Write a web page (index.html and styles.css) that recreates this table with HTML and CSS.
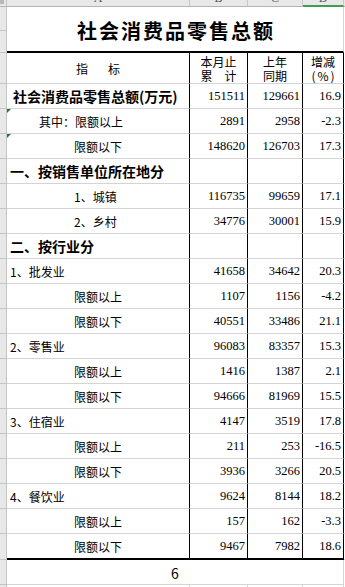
FILE: index.html
```html
<!DOCTYPE html>
<html lang="zh">
<head>
<meta charset="utf-8">
<title>社会消费品零售总额</title>
<link rel="stylesheet" href="styles.css">
</head>
<body>
<div class="sheet">
  <div class="row colhead">
    <div class="rh corner"><span class="cornermark"></span></div>
    <div class="ch ca"><span>A</span></div>
    <div class="ch cb"><span>B</span></div>
    <div class="ch cc"><span>C</span></div>
    <div class="ch cd sel"><span>D</span></div>
    <div class="ch tail"></div>
  </div>

  <div class="row title-row">
    <div class="rh split"><div class="rh-top"></div><div class="rh-bot"></div></div>
    <div class="merged title">社会消费品零售总额</div>
    <div class="tail plain"></div>
  </div>

  <div class="row head-row">
    <div class="rh"></div>
    <div class="c ca hc">指<span class="sp"></span>标</div>
    <div class="c cb hc"><span>本月止</span><span>累　计</span></div>
    <div class="c cc hc"><span>上年</span><span>同期</span></div>
    <div class="c cd hc"><span>增减</span><span class="pct">(%)</span></div>
    <div class="tail"></div>
  </div>

  <div class="row">
    <div class="rh"></div>
    <div class="c ca bold i1">社会消费品零售总额(万元)</div>
    <div class="c cb n">151511</div>
    <div class="c cc n">129661</div>
    <div class="c cd n">16.9</div>
    <div class="tail"></div>
  </div>
  <div class="row">
    <div class="rh"></div>
    <div class="c ca i2 flag">其中：限额以上</div>
    <div class="c cb n">2891</div>
    <div class="c cc n">2958</div>
    <div class="c cd n">-2.3</div>
    <div class="tail"></div>
  </div>
  <div class="row">
    <div class="rh"></div>
    <div class="c ca i3 flag">限额以下</div>
    <div class="c cb n">148620</div>
    <div class="c cc n">126703</div>
    <div class="c cd n">17.3</div>
    <div class="tail"></div>
  </div>
  <div class="row">
    <div class="rh"></div>
    <div class="c ca bold i0">一、按销售单位所在地分</div>
    <div class="c cb n"></div>
    <div class="c cc n"></div>
    <div class="c cd n"></div>
    <div class="tail"></div>
  </div>
  <div class="row">
    <div class="rh"></div>
    <div class="c ca i3">1、城镇</div>
    <div class="c cb n">116735</div>
    <div class="c cc n">99659</div>
    <div class="c cd n">17.1</div>
    <div class="tail"></div>
  </div>
  <div class="row">
    <div class="rh"></div>
    <div class="c ca i3">2、乡村</div>
    <div class="c cb n">34776</div>
    <div class="c cc n">30001</div>
    <div class="c cd n">15.9</div>
    <div class="tail"></div>
  </div>
  <div class="row">
    <div class="rh"></div>
    <div class="c ca bold i0">二、按行业分</div>
    <div class="c cb n"></div>
    <div class="c cc n"></div>
    <div class="c cd n"></div>
    <div class="tail"></div>
  </div>

  <div class="row">
    <div class="rh"></div>
    <div class="c ca i0">1、批发业</div>
    <div class="c cb n">41658</div>
    <div class="c cc n">34642</div>
    <div class="c cd n">20.3</div>
    <div class="tail"></div>
  </div>
  <div class="row">
    <div class="rh"></div>
    <div class="c ca i3">限额以上</div>
    <div class="c cb n">1107</div>
    <div class="c cc n">1156</div>
    <div class="c cd n">-4.2</div>
    <div class="tail"></div>
  </div>
  <div class="row">
    <div class="rh"></div>
    <div class="c ca i3">限额以下</div>
    <div class="c cb n">40551</div>
    <div class="c cc n">33486</div>
    <div class="c cd n">21.1</div>
    <div class="tail"></div>
  </div>

  <div class="row">
    <div class="rh"></div>
    <div class="c ca i0">2、零售业</div>
    <div class="c cb n">96083</div>
    <div class="c cc n">83357</div>
    <div class="c cd n">15.3</div>
    <div class="tail"></div>
  </div>
  <div class="row">
    <div class="rh"></div>
    <div class="c ca i3">限额以上</div>
    <div class="c cb n">1416</div>
    <div class="c cc n">1387</div>
    <div class="c cd n">2.1</div>
    <div class="tail"></div>
  </div>
  <div class="row">
    <div class="rh"></div>
    <div class="c ca i3">限额以下</div>
    <div class="c cb n">94666</div>
    <div class="c cc n">81969</div>
    <div class="c cd n">15.5</div>
    <div class="tail"></div>
  </div>

  <div class="row">
    <div class="rh"></div>
    <div class="c ca i0">3、住宿业</div>
    <div class="c cb n">4147</div>
    <div class="c cc n">3519</div>
    <div class="c cd n">17.8</div>
    <div class="tail"></div>
  </div>
  <div class="row">
    <div class="rh"></div>
    <div class="c ca i3">限额以上</div>
    <div class="c cb n">211</div>
    <div class="c cc n">253</div>
    <div class="c cd n">-16.5</div>
    <div class="tail"></div>
  </div>
  <div class="row">
    <div class="rh"></div>
    <div class="c ca i3">限额以下</div>
    <div class="c cb n">3936</div>
    <div class="c cc n">3266</div>
    <div class="c cd n">20.5</div>
    <div class="tail"></div>
  </div>

  <div class="row">
    <div class="rh"></div>
    <div class="c ca i0">4、餐饮业</div>
    <div class="c cb n">9624</div>
    <div class="c cc n">8144</div>
    <div class="c cd n">18.2</div>
    <div class="tail"></div>
  </div>
  <div class="row">
    <div class="rh"></div>
    <div class="c ca i3">限额以上</div>
    <div class="c cb n">157</div>
    <div class="c cc n">162</div>
    <div class="c cd n">-3.3</div>
    <div class="tail"></div>
  </div>
  <div class="row last">
    <div class="rh"></div>
    <div class="c ca i3">限额以下</div>
    <div class="c cb n">9467</div>
    <div class="c cc n">7982</div>
    <div class="c cd n">18.6</div>
    <div class="tail"></div>
  </div>

  <div class="row foot-row">
    <div class="rh"></div>
    <div class="merged page">6</div>
    <div class="tail plain"></div>
  </div>

  <div class="row stub">
    <div class="rh"></div>
    <div class="g ca"></div>
    <div class="g cb"></div>
    <div class="g cc"></div>
    <div class="g cd"></div>
    <div class="tail plain"></div>
  </div>
</div>
</body>
</html>
```

FILE: styles.css
```css
* { box-sizing: border-box; }

html, body {
  margin: 0;
  padding: 0;
  background: #ffffff;
}

body {
  font-family: "Noto Sans CJK SC", "Noto Sans", sans-serif;
  color: #000;
  overflow: hidden;
}

.sheet {
  width: 345px;
}

.row {
  display: flex;
  height: 25px;
}

/* column widths */
.rh { width: 7px; flex: none; background: #e8e8e8; border-right: 1px solid #c4c4c4; border-bottom: 1px solid #c4c4c4; }
.ca { width: 183px; flex: none; }
.cb { width: 58px; flex: none; }
.cc { width: 55px; flex: none; }
.cd { width: 41px; flex: none; }
.tail { flex: 1; border-bottom: 1px solid #d4d4d4; }
.tail.plain { border-bottom: 0; }

/* column header strip */
.colhead { height: 7px; }
.colhead .rh { border-bottom: 1px solid #b4b4b4; }
.cornermark { display: block; width: 4px; height: 4px; background: #b8b8b8; }
.ch {
  background: #e8e8e8;
  border-right: 1px solid #c8c8c8;
  border-bottom: 1px solid #b4b4b4;
  overflow: hidden;
  text-align: center;
  font-family: "Liberation Serif", serif;
  font-size: 12px;
  color: #555;
}
.ch span { display: block; line-height: 12px; margin-top: -8px; }
.ch.sel { border-bottom: 2px solid #3f9d4f; }
.ch.tail { border-right: 0; }

/* title */
.title-row { height: 46px; }
.rh.split { display: flex; flex-direction: column; border-bottom: 1px solid #c4c4c4; }
.rh-top { height: 24px; border-bottom: 1px solid #c4c4c4; }
.rh-bot { flex: 1; }
.merged {
  width: 337px;
  flex: none;
  border-right: 1px solid #d4d4d4;
  display: flex;
  align-items: center;
  justify-content: center;
}
.title {
  border-bottom: 2px solid #000;
  font-size: 20px;
  font-weight: 700;
  letter-spacing: 2px;
  padding: 3px 0 0 2px;
}

/* cells */
.c {
  border-right: 1px solid #000;
  border-bottom: 1px solid #d4d4d4;
  display: flex;
  align-items: center;
  font-size: 12px;
  white-space: nowrap;
  position: relative;
}

.head-row { height: 31px; }
.hc {
  flex-direction: column;
  justify-content: flex-end;
  align-items: center;
  line-height: 14px;
  padding-bottom: 0;
}
.ca.hc { flex-direction: row; justify-content: center; align-items: center; padding: 2px 0 0 0; }
.sp { display: inline-block; width: 20px; }
.pct { letter-spacing: 2px; padding-left: 2px; }

.bold { font-weight: 700; font-size: 14px; }
.i0 { padding-left: 3px; }
.i1 { padding-left: 6px; }
.i2 { padding-left: 32px; }
.i3 { padding-left: 67px; }

.flag::before {
  content: "";
  position: absolute;
  left: 0;
  top: 0;
  border-top: 4px solid #1f7a35;
  border-right: 4px solid transparent;
}

.n {
  justify-content: flex-end;
  padding-right: 2px;
  font-family: "Liberation Serif", serif;
  font-size: 12.5px;
}

.last { height: 26px; }
.last .c { border-bottom: 2px solid #000; }

.foot-row { height: 25px; }
.page {
  border-bottom: 1px solid #d4d4d4;
  font-size: 14px;
  padding-top: 1px;
}

.stub { height: 3px; }
.stub .rh { border-bottom: 0; }
.g { border-right: 1px solid #d4d4d4; }
```
